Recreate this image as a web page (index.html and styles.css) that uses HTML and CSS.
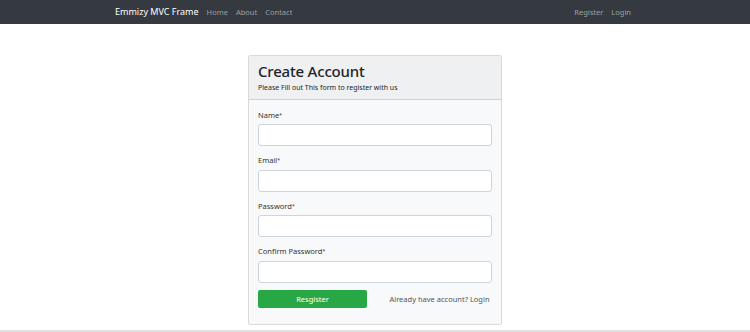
FILE: index.html
```html
<!DOCTYPE html>
<html>
	<head>
		<title>Emmizy MVC Frame</title>
		<link rel="stylesheet" href="styles.css">
	</head>
	<body>
		<nav class="navbar">
			<div class="container nav-inner">
				<a class="brand" href="#">Emmizy MVC Frame</a>
				<ul class="nav-links">
					<li><a href="#">Home</a></li>
					<li><a href="#">About</a></li>
					<li><a href="#">Contact</a></li>
				</ul>
				<ul class="nav-links nav-right">
					<li><a href="#">Register</a></li>
					<li><a href="#">Login</a></li>
				</ul>
			</div>
		</nav>

		<div class="main">
			<div class="card">
				<div class="card-header">
					<h2>Create Account</h2>
					<p>Please Fill out This form to register with us</p>
				</div>
				<form class="card-body">
					<div class="form-group">
						<label for="name">Name<sup>*</sup></label>
						<input type="text" id="name">
					</div>
					<div class="form-group">
						<label for="email">Email<sup>*</sup></label>
						<input type="text" id="email">
					</div>
					<div class="form-group">
						<label for="password">Password<sup>*</sup></label>
						<input type="password" id="password">
					</div>
					<div class="form-group">
						<label for="confirm">Confirm Password<sup>*</sup></label>
						<input type="password" id="confirm">
					</div>
					<div class="form-row">
						<button type="button" class="btn-success">Resgister</button>
						<a class="login-link" href="#">Already have account? Login</a>
					</div>
				</form>
			</div>
		</div>
		<div class="footer"></div>
	</body>
</html>
```

FILE: styles.css
```css
body {
	margin: 0;
	font-family: "Noto Sans", "Open Sans", sans-serif;
	color: #212529;
	background: #fff;
}
.container {
	width: 520px;
	margin: 0 auto;
	padding: 0 8px;
}
.navbar {
	background-color: #343a40;
	height: 24px;
}
.nav-inner {
	display: flex;
	align-items: center;
	height: 23px;
}
.brand {
	color: #fff;
	font-size: 9px;
	text-decoration: none;
	margin-right: 4px;
}
.nav-links {
	display: flex;
	list-style: none;
	margin: 0;
	padding: 0;
}
.nav-links a {
	display: block;
	color: rgba(255, 255, 255, 0.5);
	font-size: 7.5px;
	text-decoration: none;
	padding: 0 4px;
}
.nav-right {
	margin-left: auto;
}
.main {
	display: flex;
	justify-content: center;
	padding-top: 31px;
}
.card {
	width: 252px;
	border: 1px solid rgba(0, 0, 0, 0.125);
	border-radius: 3px;
	background-color: #f8f9fa;
}
.card-header {
	background-color: #eff0f1;
	border-bottom: 1px solid rgba(0, 0, 0, 0.125);
	padding: 6px 9px 4px;
}
.card-header h2 {
	margin: 0;
	font-size: 15px;
	font-weight: 500;
	line-height: 19px;
	letter-spacing: -0.2px;
}
.card-header p {
	margin: 0;
	font-size: 7px;
	line-height: 14px;
}
.card-body {
	padding: 10px 9px 16px;
}
.form-group {
	margin-bottom: 9px;
}
.form-group label {
	display: block;
	font-size: 7.5px;
	line-height: 11px;
	margin-bottom: 3px;
	color: #333;
}
.form-group sup {
	font-size: 5px;
	vertical-align: middle;
}
.form-group input {
	display: block;
	box-sizing: border-box;
	width: 100%;
	height: 22px;
	border: 1px solid #ced4da;
	border-radius: 3px;
	background: #fff;
}
.form-row {
	display: grid;
	grid-template-columns: 1fr 1fr;
	gap: 8px;
	align-items: center;
	margin-top: -2px;
}
.btn-success {
	width: 109px;
	height: 18px;
	border: none;
	border-radius: 2px;
	background-color: #28a745;
	color: #fff;
	font-family: inherit;
	font-size: 7.5px;
}
.login-link {
	color: #555;
	font-size: 7.5px;
	text-decoration: none;
	text-align: center;
	padding-left: 8px;
}
.footer {
	margin-top: 5px;
	border-top: 2px solid #e2e2e2;
}
```
